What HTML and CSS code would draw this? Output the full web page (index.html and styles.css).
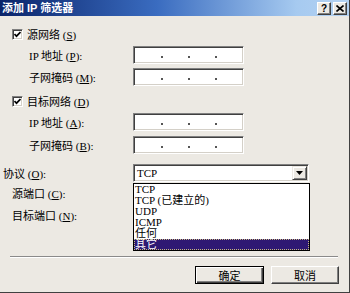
FILE: index.html
```html
<!DOCTYPE html>
<html>
<head>
<meta charset="utf-8">
<link rel="stylesheet" href="styles.css">
</head>
<body>
<div class="window">
  <div class="titlebar">
    <span class="title">添加 IP 筛选器</span>
    <div class="tbtns">
      <span class="tbtn help">?</span>
      <span class="tbtn"><svg width="8" height="7" viewBox="0 0 8 7"><path d="M0.5 0.5 L7.5 6.5 M7.5 0.5 L0.5 6.5" stroke="#000" stroke-width="1.6" fill="none"/></svg></span>
    </div>
  </div>
  <div class="content">
    <div class="row r-check1">
      <span class="check"><svg width="7" height="7" viewBox="0 0 7 7"><polyline points="0.5,3 2.5,5.2 6.5,1" stroke="#000" stroke-width="1.7" fill="none"/></svg></span>
      <span class="clabel">源网络 (<u>S</u>)</span>
    </div>
    <div class="row r-ip1">
      <span class="label ind">IP 地址 (<u>P</u>):</span>
      <div class="ip"><i></i><i></i><i></i></div>
    </div>
    <div class="row r-mask1">
      <span class="label ind">子网掩码 (<u>M</u>):</span>
      <div class="ip"><i></i><i></i><i></i></div>
    </div>
    <div class="row r-check2">
      <span class="check"><svg width="7" height="7" viewBox="0 0 7 7"><polyline points="0.5,3 2.5,5.2 6.5,1" stroke="#000" stroke-width="1.7" fill="none"/></svg></span>
      <span class="clabel">目标网络 (<u>D</u>)</span>
    </div>
    <div class="row r-ip2">
      <span class="label ind">IP 地址 (<u>A</u>):</span>
      <div class="ip"><i></i><i></i><i></i></div>
    </div>
    <div class="row r-mask2">
      <span class="label ind">子网掩码 (<u>B</u>):</span>
      <div class="ip"><i></i><i></i><i></i></div>
    </div>
    <div class="row r-proto">
      <span class="label ind-proto">协议 (<u>O</u>):</span>
      <div class="combo-wrap">
        <div class="combo">
          <span class="combo-text">TCP</span>
          <span class="combo-btn"><svg width="7" height="4" viewBox="0 0 7 4"><polygon points="0,0 7,0 3.5,4" fill="#000"/></svg></span>
        </div>
        <ul class="list">
          <li>TCP</li>
          <li>TCP (已建立的)</li>
          <li>UDP</li>
          <li>ICMP</li>
          <li>任何</li>
          <li class="sel">其它</li>
        </ul>
      </div>
    </div>
    <div class="row r-src">
      <span class="label ind-port">源端口 (<u>C</u>):</span>
    </div>
    <div class="row r-dst">
      <span class="label ind-port">目标端口 (<u>N</u>):</span>
    </div>
    <div class="sep"></div>
    <div class="buttons">
      <span class="btn default">确定</span>
      <span class="btn">取消</span>
    </div>
  </div>
</div>
</body>
</html>
```
FILE: styles.css
```css
html, body {
  margin: 0;
  padding: 0;
  background: #ece9e3;
}

.window {
  width: 350px;
  height: 293px;
  box-sizing: border-box;
  background: #ece9e3;
  border-right: 1px solid #404040;
  border-bottom: 1px solid #404040;
  font-family: "Liberation Serif", "Noto Sans CJK SC", serif;
  font-size: 11px;
  color: #000;
  overflow: hidden;
}

.titlebar {
  height: 16px;
  display: flex;
  align-items: center;
  justify-content: space-between;
  padding: 0 2px 0 2px;
  background: linear-gradient(to right, #0a246a 0%, #3a6cc0 45%, #a6caf0 85%, #b4d2f2 100%);
}

.title {
  color: #fff;
  font-family: "Liberation Sans", "Noto Sans CJK SC", sans-serif;
  font-weight: bold;
  font-size: 11px;
  line-height: 16px;
  letter-spacing: 0;
}

.tbtns {
  display: flex;
  gap: 2px;
  padding-top: 1px;
}

.tbtn {
  width: 14px;
  height: 13px;
  box-sizing: border-box;
  background: #ece9e3;
  border: 1px solid;
  border-color: #fff #404040 #404040 #fff;
  box-shadow: inset -1px -1px #808080;
  display: flex;
  align-items: center;
  justify-content: center;
  font-family: "Liberation Sans", sans-serif;
  font-weight: bold;
  font-size: 10px;
  line-height: 1;
}

.content {
  display: flex;
  flex-direction: column;
}

.row {
  display: flex;
  align-items: center;
  height: 18px;
}

.r-check1 { margin-top: 9px; }
.r-ip1 { margin-top: 3px; }
.r-mask1 { margin-top: 4px; }
.r-check2 { margin-top: 6px; }
.r-ip2 { margin-top: 3px; }
.r-mask2 { margin-top: 5px; }
.r-proto { margin-top: 10px; }
.r-src { margin-top: 2px; }
.r-dst { margin-top: 4px; }

.check {
  width: 11px;
  height: 11px;
  box-sizing: border-box;
  margin-left: 12px;
  background: #fff;
  border: 1px solid;
  border-color: #808080 #fff #fff #808080;
  box-shadow: inset 1px 1px #404040, inset -1px -1px #d4d0c8;
  display: flex;
  align-items: center;
  justify-content: center;
}

.clabel {
  margin-left: 4px;
}

.label {
  width: 133px;
  box-sizing: border-box;
  white-space: nowrap;
}

.ind { padding-left: 29px; }
.ind-proto { padding-left: 3px; }
.ind-port { padding-left: 12px; }

.ip {
  width: 111px;
  height: 18px;
  box-sizing: border-box;
  background: #fff;
  border: 1px solid;
  border-color: #808080 #fff #fff #808080;
  box-shadow: inset 1px 1px #404040, inset -1px -1px #d4d0c8;
  display: flex;
  align-items: flex-end;
  gap: 25px;
  padding: 0 0 5px 27px;
}

.ip i {
  display: block;
  width: 2px;
  height: 2px;
  background: #555;
}

.combo-wrap {
  position: relative;
}

.combo {
  width: 176px;
  height: 18px;
  box-sizing: border-box;
  background: #fff;
  border: 1px solid;
  border-color: #808080 #fff #fff #808080;
  box-shadow: inset 1px 1px #404040, inset -1px -1px #d4d0c8;
  display: flex;
  align-items: center;
  padding: 0 1px 0 3px;
}

.combo-text {
  flex: 1;
}

.combo-btn {
  width: 15px;
  height: 14px;
  box-sizing: border-box;
  background: #ece9e3;
  border: 1px solid;
  border-color: #ece9e3 #404040 #404040 #ece9e3;
  box-shadow: inset 1px 1px #fff, inset -1px -1px #808080;
  display: flex;
  align-items: center;
  justify-content: center;
}

.list {
  position: absolute;
  left: 0;
  top: 19px;
  width: 177px;
  margin: 0;
  padding: 0;
  list-style: none;
  box-sizing: border-box;
  background: #fff;
  border: 1px solid #000;
  z-index: 2;
}

.list li {
  height: 11px;
  line-height: 11px;
  padding-left: 1px;
  white-space: nowrap;
}

.list li.sel {
  background: #2e1873;
  color: #fff;
  outline: 1px dotted #c8b880;
  outline-offset: -1px;
}

.sep {
  margin: 32px 11px 0 10px;
  border-top: 1px solid #8a8a8a;
  border-bottom: 1px solid #fff;
}

.buttons {
  display: flex;
  justify-content: flex-end;
  gap: 7px;
  margin-top: 8px;
  padding-right: 10px;
}

.btn {
  width: 68px;
  height: 18px;
  box-sizing: border-box;
  background: #ece9e3;
  border: 1px solid;
  border-color: #fff #404040 #404040 #fff;
  box-shadow: inset -1px -1px #808080;
  display: flex;
  align-items: center;
  justify-content: center;
  font-family: "Noto Sans CJK SC", sans-serif;
  font-size: 11px;
}

.btn.default {
  width: 69px;
  border: 1px solid #000;
  box-shadow: inset 1px 1px #fff, inset -1px -1px #404040, inset -2px -2px #808080;
}
```
